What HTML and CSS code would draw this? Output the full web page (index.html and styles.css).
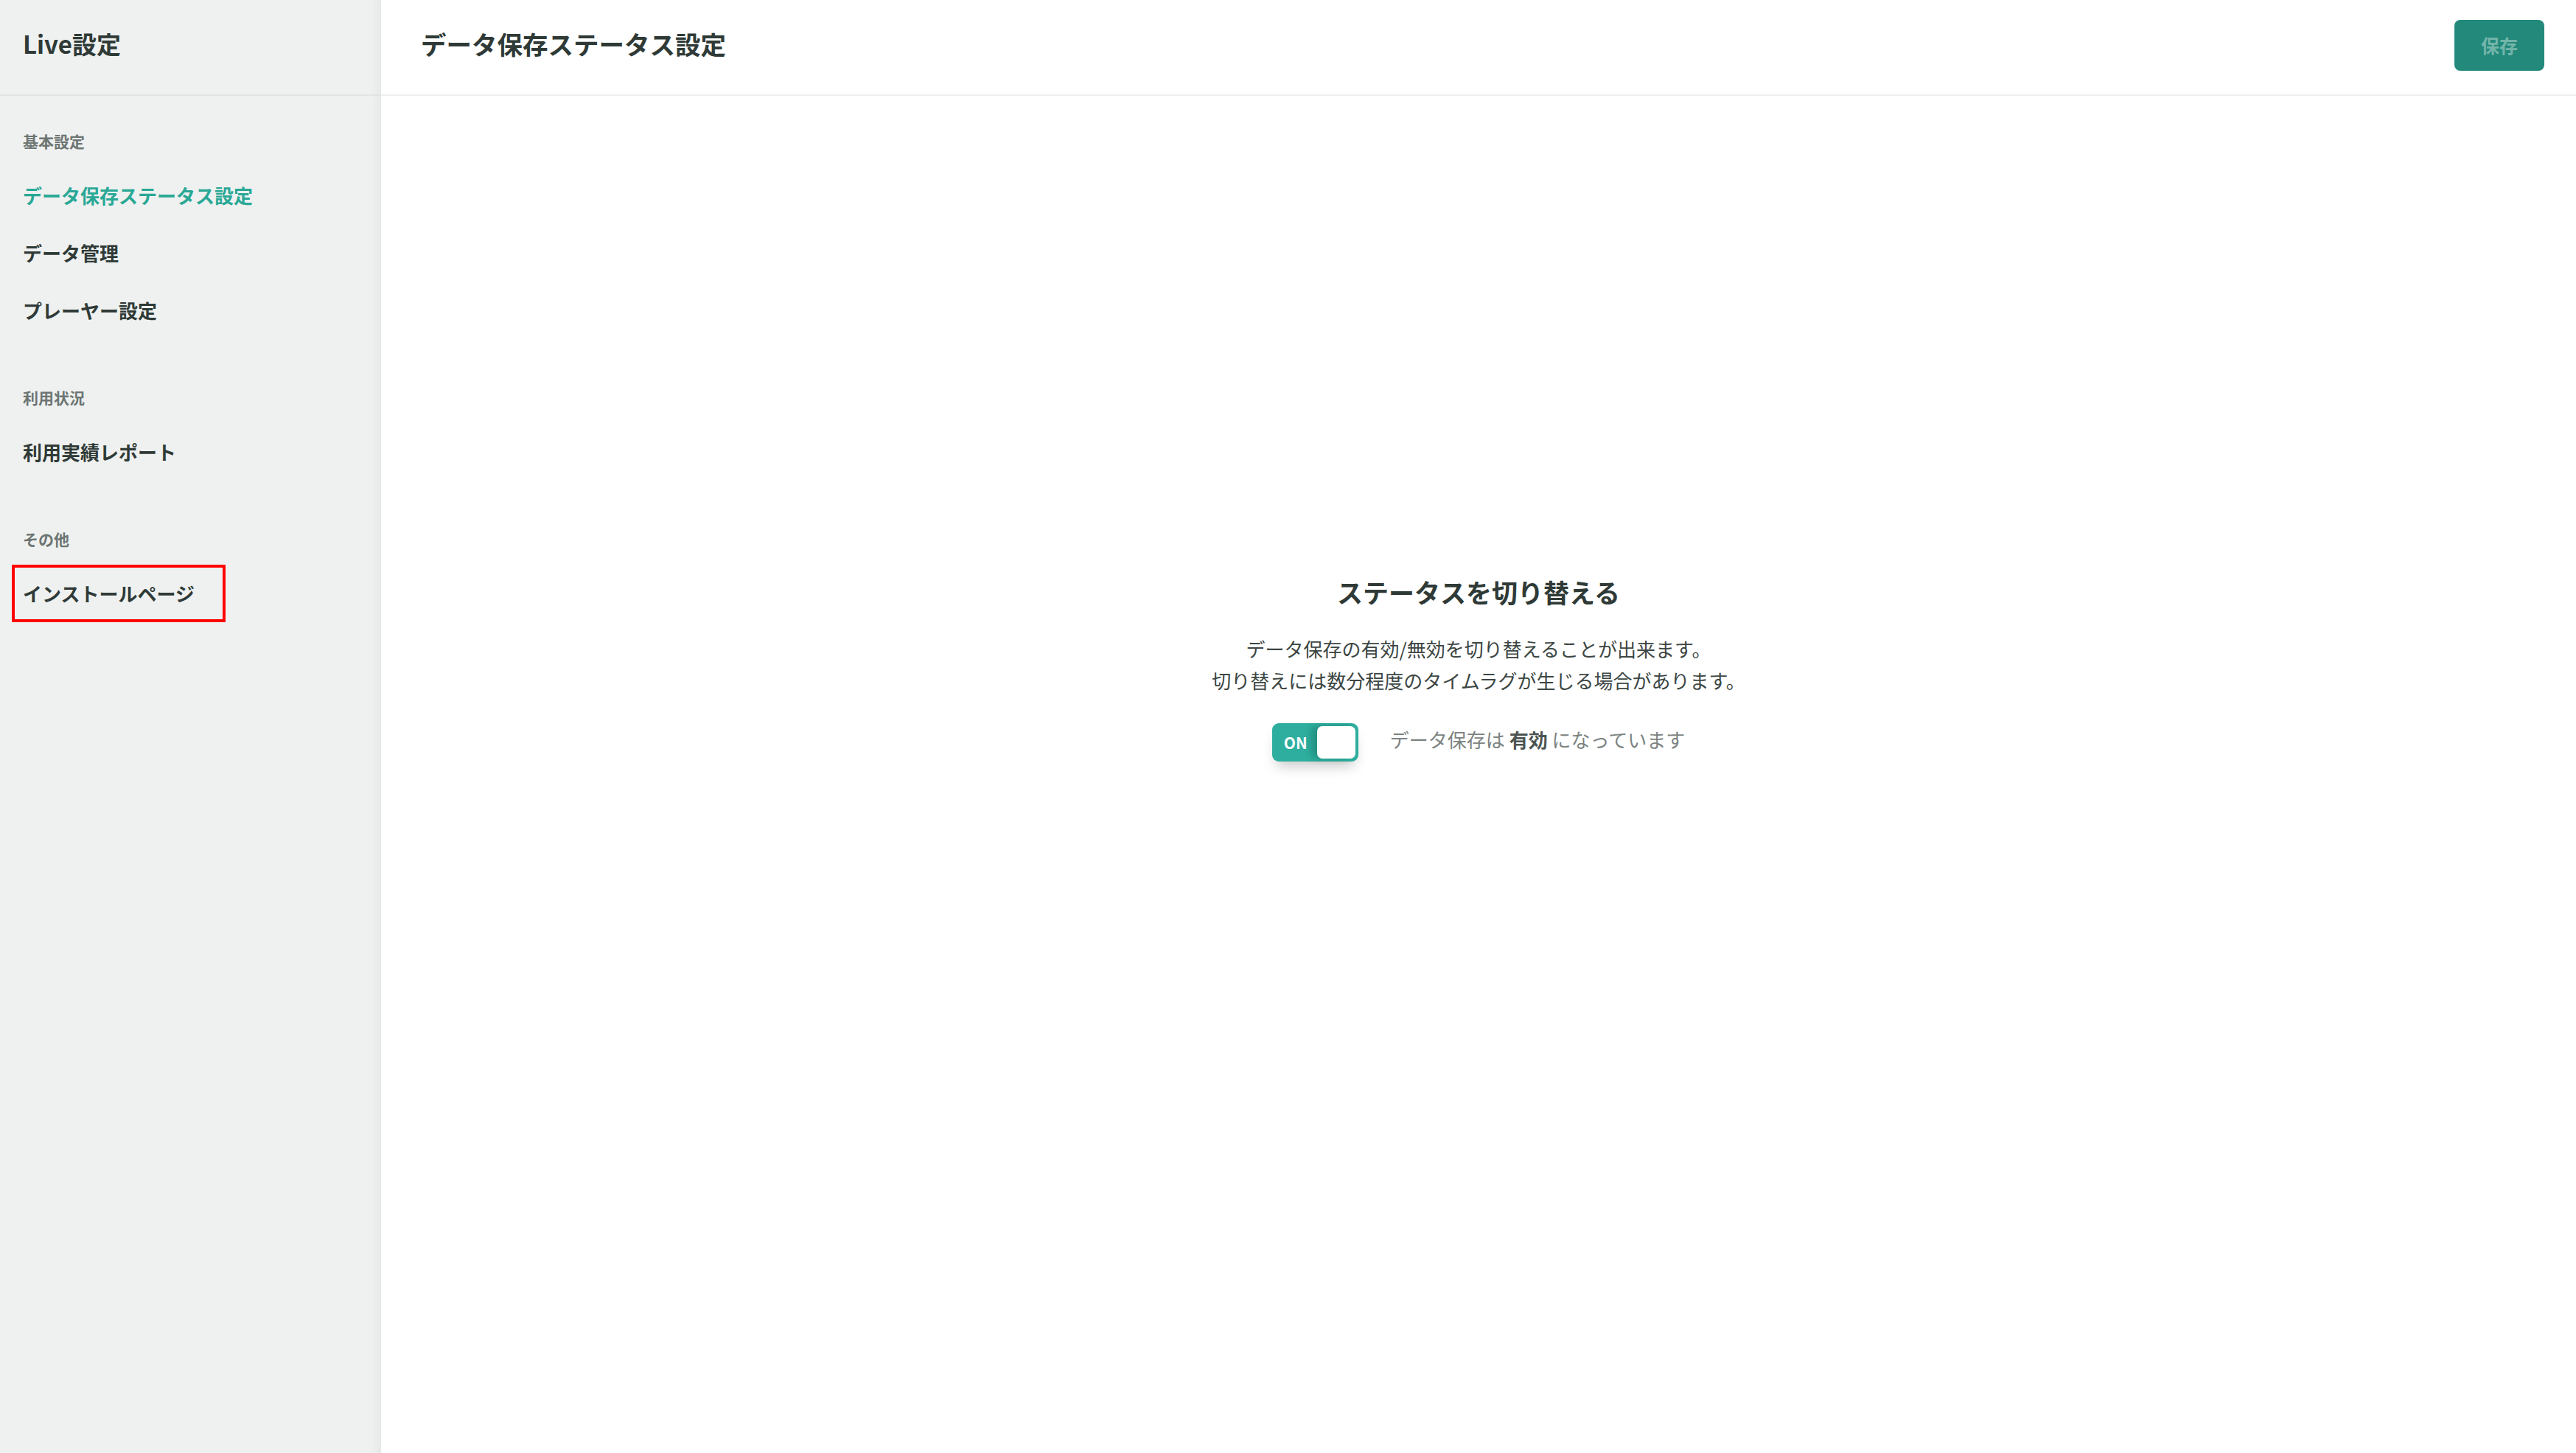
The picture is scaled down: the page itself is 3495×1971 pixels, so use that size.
FILE: index.html
```html
<!DOCTYPE html>
<html lang="ja">
<head>
    <meta charset="UTF-8">
    <meta name="viewport" content="width=device-width, initial-scale=1.0">
    <title>Live設定 - データ保存ステータス設定</title>
    <link rel="stylesheet" href="styles.css">
</head>
<body>

<div class="app">
    <!-- サイドメニュー -->
    <aside class="sidebar">
        <div class="sidebar-head">Live設定</div>
        <nav class="nav">
            <div class="nav-group">
                <div class="nav-label">基本設定</div>
                <a href="#" class="nav-item active">データ保存ステータス設定</a>
                <a href="#" class="nav-item">データ管理</a>
                <a href="#" class="nav-item">プレーヤー設定</a>
            </div>
            <div class="nav-group">
                <div class="nav-label">利用状況</div>
                <a href="#" class="nav-item">利用実績レポート</a>
            </div>
            <div class="nav-group">
                <div class="nav-label">その他</div>
                <a href="#" class="nav-item marked">インストールページ</a>
            </div>
        </nav>
    </aside>

    <!-- メイン -->
    <main class="main">
        <header class="main-head">
            <h1 class="page-title">データ保存ステータス設定</h1>
            <button class="btn-save" disabled>保存</button>
        </header>

        <section class="status-panel">
            <h2 class="status-title">ステータスを切り替える</h2>
            <p class="status-desc">データ保存の有効/無効を切り替えることが出来ます。<br>切り替えには数分程度のタイムラグが生じる場合があります。</p>
            <div class="status-row">
                <label class="switch">
                    <span class="switch-text">ON</span>
                    <span class="switch-knob"></span>
                </label>
                <span class="status-note">データ保存は <b>有効</b> になっています</span>
            </div>
        </section>
    </main>
</div>

</body>
</html>
```

FILE: styles.css
```css
* {
    box-sizing: border-box;
}
body {
    margin: 0;
    font-family: "Noto Sans CJK JP", "Noto Sans", sans-serif;
    color: #2f3a37;
    background: #fff;
}
.app {
    display: flex;
    min-height: 100vh;
}

/* サイドメニュー */
.sidebar {
    width: 517px;
    flex-shrink: 0;
    background: #eff1f0;
    box-shadow: inset -14px 0 14px -10px rgba(0, 0, 0, 0.05);
}
.sidebar-head {
    height: 130px;
    padding: 0 0 10px 31px;
    display: flex;
    align-items: center;
    font-size: 33px;
    font-weight: 700;
    border-bottom: 2px solid #e2e4e3;
}
.nav {
    padding: 46px 0 0 16px;
}
.nav-group {
    margin-bottom: 64px;
}
.nav-label {
    padding-left: 15px;
    margin-bottom: 20px;
    font-size: 21px;
    line-height: 30px;
    font-weight: 700;
    color: #6d7573;
}
.nav-item {
    display: block;
    padding: 19px 15px;
    font-size: 26px;
    line-height: 40px;
    font-weight: 700;
    color: #2f3a37;
    text-decoration: none;
}
.nav-item.active {
    color: #2aa896;
}
.nav-item.marked {
    width: 290px;
    outline: 4px solid #ff0000;
    outline-offset: -4px;
}

/* メイン */
.main {
    flex: 1;
    display: flex;
    flex-direction: column;
}
.main-head {
    height: 130px;
    display: flex;
    align-items: center;
    justify-content: space-between;
    padding: 0 43px 0 54px;
    border-bottom: 2px solid #f0f0f0;
}
.page-title {
    margin: 0 0 10px;
    font-size: 34.5px;
    font-weight: 700;
    color: #2f3a37;
}
.btn-save {
    width: 122px;
    height: 69px;
    margin-bottom: 6px;
    border: none;
    border-radius: 8px;
    background: #22897b;
    color: #74b5aa;
    font-family: inherit;
    font-size: 25px;
    font-weight: 700;
}

/* ステータス切り替え */
.status-panel {
    padding-top: 649px;
    text-align: center;
}
.status-title {
    margin: 0;
    font-size: 35px;
    line-height: 48px;
    font-weight: 700;
    color: #2f3a37;
}
.status-desc {
    margin: 31px 0 0;
    font-size: 26px;
    line-height: 43px;
    color: #3c4643;
}
.status-row {
    margin-top: 37px;
    display: flex;
    justify-content: center;
    align-items: center;
    gap: 43px;
}
.switch {
    position: relative;
    width: 117px;
    height: 52px;
    border-radius: 9px;
    background: #2eae9e;
    box-shadow: 0 12px 18px -6px rgba(0, 0, 0, 0.22);
    display: flex;
    align-items: center;
    padding: 0 4px 0 16px;
}
.switch-text {
    font-size: 21px;
    font-weight: 700;
    color: #fff;
    flex: 1;
    text-align: left;
}
.switch-knob {
    width: 52px;
    height: 44px;
    border-radius: 7px;
    background: #fff;
    box-shadow: -8px 0 10px rgba(0, 60, 50, 0.25);
}
.status-note {
    font-size: 26px;
    color: #7c8381;
    margin-bottom: 10px;
}
.status-note b {
    color: #4b5451;
}
```
